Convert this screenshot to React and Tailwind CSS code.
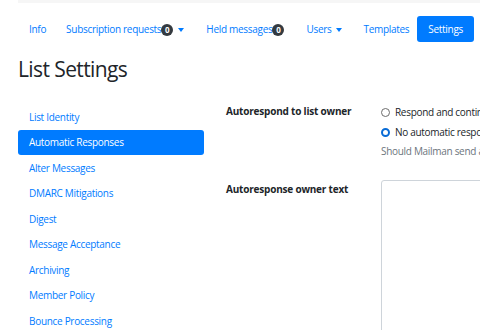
import React from "react";

const Badge = () => (
  <span className="inline-flex items-center justify-center w-[12px] h-[12px] rounded-full bg-[#343a40] text-white text-[8px] font-bold leading-none tracking-normal">0</span>
);

const Caret = () => (
  <span className="ml-[5px] inline-block w-0 h-0 border-l-[3.5px] border-r-[3.5px] border-t-[4px] border-l-transparent border-r-transparent border-t-[#007bff]" />
);

const sideItems = [
  "List Identity",
  "Automatic Responses",
  "Alter Messages",
  "DMARC Mitigations",
  "Digest",
  "Message Acceptance",
  "Archiving",
  "Member Policy",
  "Bounce Processing",
];

export default function App() {
  return (
    <div className="w-[480px] h-[330px] overflow-hidden bg-white font-['Open_Sans',sans-serif] text-[10px] tracking-[-0.3px] text-[#212529]">
      <div className="ml-[18px] h-[3px] bg-[#f6f6f6]" />
      <nav className="mt-[13px] ml-[18px] flex items-center h-[26px] whitespace-nowrap text-[#007bff]">
        <span className="pl-[11px] pr-[10px] pt-[1px]">Info</span>
        <span className="pl-[10px] pr-[11px] pt-[1px] flex items-center">Subscription requests<Badge /><Caret /></span>
        <span className="px-[11px] pt-[1px] flex items-center">Held messages<Badge /></span>
        <span className="px-[11px] pt-[1px] flex items-center">Users<Caret /></span>
        <span className="pl-[10px] pr-[8px] pt-[1px]">Templates</span>
        <span className="h-[26px] px-[11px] pt-[1px] flex items-center rounded-[3px] bg-[#007bff] text-white">Settings</span>
      </nav>
      <h1 className="mt-[14px] ml-[18px] text-[21px] leading-[26px] tracking-[-0.6px] font-normal text-[#212529]">List Settings</h1>
      <div className="mt-[22px] ml-[18px] flex">
        <div className="w-[186px] flex flex-col shrink-0">
          {sideItems.map((s, i) => (
            <div
              key={s}
              className={
                "h-[25.5px] px-[11px] pt-[1px] flex items-center rounded-[3px] whitespace-nowrap " +
                (i === 1 ? "bg-[#007bff] text-white" : "text-[#007bff]")
              }
            >
              {s}
            </div>
          ))}
        </div>
        <div className="ml-[22px] flex-1 flex flex-col whitespace-nowrap">
          <div className="flex">
            <div className="w-[155px] shrink-0 font-bold tracking-[-0.2px]">Autorespond to list owner</div>
            <div className="flex flex-col">
              <div className="flex items-center h-[19px] -mt-[1px]">
                <span className="w-[9px] h-[9px] rounded-full border border-[#6c6c6c] bg-white" />
                <span className="ml-[5px]">Respond and continue processing</span>
              </div>
              <div className="flex items-center h-[19px] mt-[1px]">
                <span className="w-[9px] h-[9px] rounded-full border-[2.5px] border-[#0a6cd6] bg-white" />
                <span className="ml-[5px]">No automatic response</span>
              </div>
              <div className="mt-[2px] text-[#6c757d]">Should Mailman send an auto-response to emails sent to the -owner address?</div>
            </div>
          </div>
          <div className="flex mt-[21px]">
            <div className="w-[155px] shrink-0 font-bold tracking-[-0.2px] pt-[2px]">Autoresponse owner text</div>
            <div className="w-[200px] h-[160px] border border-[#ced4da] rounded-[3px]" />
          </div>
        </div>
      </div>
    </div>
  );
}
